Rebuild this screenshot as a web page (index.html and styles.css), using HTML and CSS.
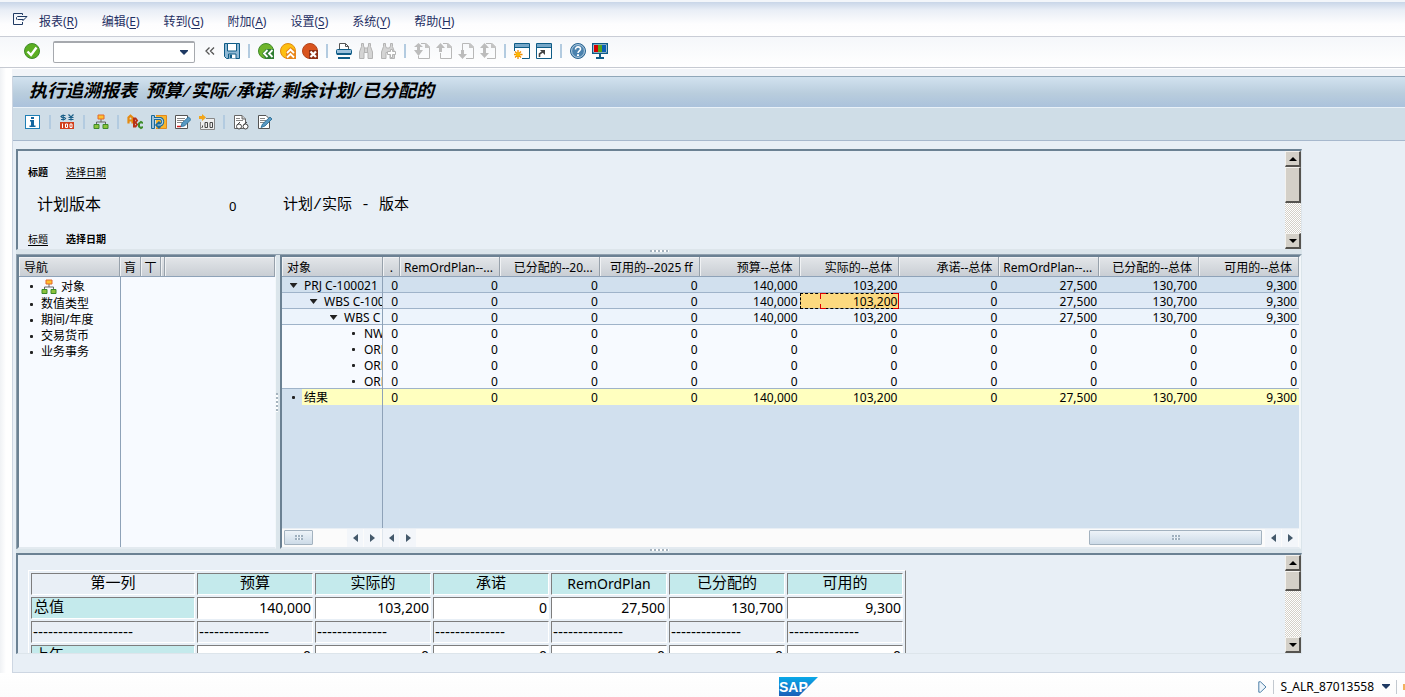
FILE: index.html
```html
<!DOCTYPE html>
<html lang="zh-CN">
<head>
<meta charset="utf-8">
<title>执行追溯报表</title>
<link rel="stylesheet" href="styles.css">
</head>
<body>
<nav class="menubar" aria-label="菜单">
  <button class="menu-icon" aria-label="系统菜单"><svg width="16" height="14" viewBox="0 0 16 14" fill="none" stroke="#1f3a63"><path d="M10.500 3V1.500H1.500V12.500H10.500V10M4.500 7.500V5.500L5.500 4.500H15L10.500 9M5.500 7.500H11.500"/></svg></button>
  <button>报表(<u>R</u>)</button>
  <button>编辑(<u>E</u>)</button>
  <button>转到(<u>G</u>)</button>
  <button>附加(<u>A</u>)</button>
  <button>设置(<u>S</u>)</button>
  <button>系统(<u>Y</u>)</button>
  <button>帮助(<u>H</u>)</button>
</nav>

<div class="toolbar">
  <button aria-label="回车"><svg width="16" height="16" viewBox="0 0 16 16"><circle cx="8" cy="8" r="7.500" fill="#5cae22" stroke="#3f8c2a"/><path d="M3.500 8.500L7 12L12.500 4.500" fill="none" stroke="#fff" stroke-width="2.400"/></svg></button>
  <div class="command">
    <input type="text" aria-label="命令字段">
    <button aria-label="历史"><svg width="8" height="5" viewBox="0 0 8 5"><path d="M0 0H8V1L4 5L0 1Z" fill="#1f3a63"/></svg></button>
  </div>
  <button aria-label="折叠"><svg width="16" height="16" viewBox="0 0 16 16" fill="none" stroke="#555" stroke-width="1.300"><path d="M7.500 4.500L4 8L7.500 11.500M12 4.500L8.500 8L12 11.500"/></svg></button>
  <button aria-label="保存"><svg width="16" height="16" viewBox="0 0 16 16"><path d="M.5.5H15.500V15.500H2.500L.5 13.500Z" fill="#8fb8d4" stroke="#0f5c87"/><path d="M3.500 .5H12.500V8H3.500Z" fill="#fff" stroke="#0f5c87"/><path d="M4.500 15.500V11H12V15.500" fill="#fff" stroke="#0f5c87"/><path d="M5.500 11.500H8V15H5.500Z" fill="#0f5c87"/></svg></button>
  <span class="sep"></span>
  <button aria-label="返回"><svg width="16" height="16" viewBox="0 0 16 16"><circle cx="8" cy="8" r="7.500" fill="#6fb52c" stroke="#3f8c2a"/><path d="M4 10.500L8 6H16V16H8Z" fill="#2f7d32"/><path d="M9.500 7L6 10.500L9.500 14M14.500 7L11 10.500L14.500 14" fill="none" stroke="#fff" stroke-width="1.800"/></svg></button>
  <button aria-label="退出"><svg width="16" height="16" viewBox="0 0 16 16"><circle cx="8" cy="8" r="7.500" fill="#fdbf11" stroke="#e08a12"/><path d="M6 8L10.500 4L16 8V16H6Z" fill="#e8861a"/><path d="M7 10L10.500 6.500L14 10M7 14.500L10.500 11L14 14.500" fill="none" stroke="#fff" stroke-width="1.800"/></svg></button>
  <button aria-label="取消"><svg width="16" height="16" viewBox="0 0 16 16"><circle cx="8" cy="8" r="7.500" fill="#d9541e" stroke="#b2451c"/><path d="M7 7H16V16H7Z" fill="#8e2f14"/><path d="M8.500 8.500L14 14M14 8.500L8.500 14" stroke="#fff" stroke-width="2.200"/></svg></button>
  <span class="sep"></span>
  <button aria-label="打印"><svg width="16" height="16" viewBox="0 0 16 16"><path d="M3.500 7V.5H9.500L12.500 3.500V7" fill="#fff" stroke="#555"/><path d="M9.500 .5V3.500H12.500" fill="none" stroke="#555"/><rect x=".5" y="6.500" width="15" height="5" rx="1" fill="#9cc1dc" stroke="#0f5c87"/><path d="M1 11H15M2 15H14" stroke="#0f5c87" stroke-width="2"/></svg></button>
  <button aria-label="查找" disabled><svg width="16" height="16" viewBox="0 0 16 16" fill="#d4d4d4" stroke="#b4b4b4"><path d="M3.500 .5H5.500V3L6.500 5H9.500L10.500 3V.5H12.500V3.500L14.500 9V15.500H10V9.500H6V15.500H1.500V9L3.500 3.500Z"/><path d="M6.500 5V9M9.500 5V9"/></svg></button>
  <button aria-label="继续查找" disabled><svg width="16" height="16" viewBox="0 0 16 16" fill="#d4d4d4" stroke="#b4b4b4"><path d="M3.500 .5H5.500V3L6.500 5H9.500L10.500 3V.5H12.500V3.500L14.500 9V15.500H10V9.500H6V15.500H1.500V9L3.500 3.500Z"/><path d="M10.500 6.500H12.500V8.500H15.500V11.500H12.500V14.500H10.500V11.500H7.500V8.500H10.500Z" fill="#fff"/></svg></button>
  <span class="sep"></span>
  <button aria-label="首页" disabled><svg width="16" height="16" viewBox="0 0 16 16"><path d="M7 .5H12L15.500 4V15.500H4.500V13" fill="none" stroke="#b8b8b8"/><path d="M11 0H12L16 4V5H11Z" fill="#c4c4c4"/><path d="M4.500 0L9 4H6V7H9L4.500 13L0 7H3V4H0Z" fill="#bcbcbc"/></svg></button>
  <button aria-label="上一页" disabled><svg width="16" height="16" viewBox="0 0 16 16"><path d="M7 .5H12L15.500 4V15.500H4.500V10" fill="none" stroke="#b8b8b8"/><path d="M11 0H12L16 4V5H11Z" fill="#c4c4c4"/><path d="M4.500 0L9 5H6V9H3V5H0Z" fill="#bcbcbc"/></svg></button>
  <button aria-label="下一页" disabled><svg width="16" height="16" viewBox="0 0 16 16"><path d="M4.500 7V.5H12L15.500 4V15.500H8" fill="none" stroke="#b8b8b8"/><path d="M11 0H12L16 4V5H11Z" fill="#c4c4c4"/><path d="M4.500 16L9 11H6V7H3V11H0Z" fill="#bcbcbc"/></svg></button>
  <button aria-label="末页" disabled><svg width="16" height="16" viewBox="0 0 16 16"><path d="M6 .5H12L15.500 4V15.500H7" fill="none" stroke="#b8b8b8"/><path d="M11 0H12L16 4V5H11Z" fill="#c4c4c4"/><path d="M4.500 0L9 5H6V10H9L4.500 15L0 10H3V5H0Z" fill="#bcbcbc"/></svg></button>
  <span class="sep"></span>
  <button aria-label="新会话"><svg width="16" height="16" viewBox="0 0 16 16"><path d="M.5.5H15.500V15.500H.5Z" fill="#fff" stroke="#0f5c87"/><path d="M1 1H15V4.500H1Z" fill="#76a7c8"/><path d="M0 4.500H16" stroke="#0f5c87"/><path d="M0 8H8V16H0Z" fill="#fff"/><path d="M4 7V16M-.5 11.500H8.500M1 8.500L7 14.500M7 8.500L1 14.500" stroke="#f08c00" stroke-width="1.300"/><circle cx="4" cy="11.500" r="2.300" fill="#fbb800"/></svg></button>
  <button aria-label="快捷方式"><svg width="16" height="16" viewBox="0 0 16 16"><path d="M.5.5H15.500V15.500H.5Z" fill="#fff" stroke="#0f5c87"/><path d="M1 1H15V4.500H1Z" fill="#76a7c8"/><path d="M0 4.500H16" stroke="#0f5c87"/><path d="M3.500 14V11L7 8.500" fill="none" stroke="#444" stroke-width="1.600"/><path d="M4 7H9V12Z" fill="#444"/></svg></button>
  <span class="sep"></span>
  <button aria-label="帮助"><svg width="16" height="16" viewBox="0 0 16 16"><circle cx="8" cy="8" r="7.500" fill="#4b82ae" stroke="#2b6592"/><circle cx="8" cy="8" r="6.400" fill="none" stroke="#b7d0e2"/><path d="M5.500 6.500C5.500 2.800 10.700 3.200 10.500 6.200C10.400 7.700 8 8 8 10" fill="none" stroke="#fff" stroke-width="1.600"/><path d="M7 11.200H9V13H7Z" fill="#fff"/></svg></button>
  <button aria-label="定制布局"><svg width="16" height="16" viewBox="0 0 16 16"><path d="M.7.7H15.300V10.300H.7Z" fill="#fff" stroke="#0f5c87" stroke-width="1.400"/><path d="M2 2H6V9H2Z" fill="#d40000"/><path d="M6 2H10V9H6Z" fill="#55a51c"/><path d="M10 2H14V9H10Z" fill="#0a5fb4"/><path d="M7 11H9V14H12V16H4V14H7Z" fill="#0f5c87"/></svg></button>
</div>

<main class="window">
  <h1>执行追溯报表<span> </span>预算<span>/</span>实际<span>/</span>承诺<span>/</span>剩余计划<span>/</span>已分配的</h1>
  <div class="appbar">
    <button aria-label="信息"><svg width="16" height="16" viewBox="0 0 16 16"><rect x=".5" y="1.500" width="14" height="13" fill="#fff" stroke="#1f7fb5"/><path d="M6 3H9V5H6ZM5 6H9V11.500H10.500V13H4.500V11.500H6V7.500H5Z" fill="#1467a0"/></svg></button>
    <span class="sep"></span>
    <button aria-label="货币"><svg width="16" height="16" viewBox="0 0 16 16"><path d="M6.500 1.500H3L2 2.500L3 3.500H5.500L6.500 4.500L5.500 5.500H2M4.200 .5V6.500M9.500 .5L12 3L14.500 .5M12 3V6.500M9.500 3.500H14.500M9.500 5.500H14.500" fill="none" stroke="#1b5f88" stroke-width="1.200"/><path d="M1 8H15V15H1Z" fill="#d2401e"/><path d="M3.500 9.500V14M6.500 10V13.500H8.500V10ZM11 10V13.500H13V10Z" fill="none" stroke="#fff"/></svg></button>
    <span class="sep"></span>
    <button aria-label="层次"><svg width="16" height="16" viewBox="0 0 16 16"><path d="M8 5V8M3.500 11V8H12.500V11" fill="none" stroke="#666"/><path d="M5 1H11V5H5Z" fill="#fdc22f" stroke="#e4672a"/><path d="M1 10.500H6V14.500H1ZM10 10.500H15V14.500H10Z" fill="#8cc23c" stroke="#3d8b27"/></svg></button>
    <span class="sep"></span>
    <button aria-label="文本"><svg width="16" height="16" viewBox="0 0 16 16" fill="none"><path d="M1.500 9.500V3.500L3.500 1.800L5.500 3.500V9.500M1.500 6.500H5.500" stroke="#e58a10" stroke-width="2.200"/><path d="M7 4.500V12.500H8.500L10 10.500L8.500 8.500L10 6.500L8.500 4.500ZM7 8.500H8.500" stroke="#b83216" stroke-width="2"/><path d="M16 9L14 8L12 9.500V12.500L14 14L16 13" stroke="#3f8c2a" stroke-width="2"/></svg></button>
    <button aria-label="浏览"><svg width="16" height="16" viewBox="0 0 16 16"><path d="M5 1.500H15.500V14.500H5" fill="#f9b52c" stroke="#e2891d"/><path d="M.5 1.500H3.500V14.500H.5Z" fill="#9cc1dc" stroke="#1b6a98"/><path d="M4 4.500H9.500A3.500 3.500 0 0 1 9.500 11H7M9 8L6 11L9 14" fill="none" stroke="#1b6a98" stroke-width="3"/><path d="M3 4.500H9.500A3.500 3.500 0 0 1 9.500 11H6.500" fill="none" stroke="#b9d4e6" stroke-width="1.200"/></svg></button>
    <button aria-label="编辑"><svg width="16" height="16" viewBox="0 0 16 16"><path d="M12.500 9V14.500H.5V1.500H12.500V4" fill="#fff" stroke="#555"/><path d="M2 4.500H10M2 6.500H9M2 8.500H7" stroke="#888"/><path d="M2 12.500H6" stroke="#d31f1f" stroke-width="1.500"/><path d="M6 12.500L7 9L13.500 3L16 5.500L9.500 12Z" fill="#5a99c2" stroke="#1f6792" stroke-width=".8"/></svg></button>
    <button aria-label="小数位"><svg width="16" height="16" viewBox="0 0 16 16"><path d="M7 4.500H15.500V15.500H1.500V8" fill="#eee" stroke="#888"/><path d="M0 2H3V0L7 3.500L3 7V5H0Z" fill="#f2a51a"/><path d="M3.500 11.500V13L2.500 14M6 8.500H8.500V13.500H6ZM11 8.500H13.500V13.500H11Z" fill="none" stroke="#444"/></svg></button>
    <span class="sep"></span>
    <button aria-label="显示文档"><svg width="16" height="16" viewBox="0 0 16 16"><path d="M1.500 1.500H9L12.500 5V14.500H1.500Z" fill="#fff" stroke="#666"/><path d="M9 1.500V5H12.500" fill="#ccc" stroke="#666"/><path d="M3 4.500H7M3 6.500H10" stroke="#888"/><circle cx="6" cy="12.500" r="2.500" fill="#fff" stroke="#444"/><circle cx="12.500" cy="12.500" r="2.500" fill="#fff" stroke="#444"/><path d="M4 11L7 8M10.500 11L14 8" stroke="#444"/></svg></button>
    <button aria-label="更改文档"><svg width="16" height="16" viewBox="0 0 16 16"><path d="M1.500 1.500H9L12.500 5V14.500H1.500Z" fill="#fff" stroke="#555"/><path d="M3 4.500H8M3 6.500H9M3 8.500H8" stroke="#888"/><path d="M4 13.500L5.500 10L13 3L15 5L8 12Z" fill="#5a99c2" stroke="#1f6792" stroke-width=".8"/></svg></button>
  </div>

  <div class="work">
    <section class="panel">
      <div class="panel-body intro">
        <p class="tabs"><strong>标题</strong><a href="#date">选择日期</a></p>
        <dl class="version"><dt>计划版本</dt><dd>0</dd><dd>计划/实际 - 版本</dd></dl>
        <p class="tabs"><a href="#title">标题</a><strong id="date">选择日期</strong></p>
      </div>
      <div class="vscroll">
        <button aria-label="向上"><svg width="8" height="4"><path d="M0 4L4 0L8 4Z"/></svg></button>
        <div class="vthumb tall"></div>
        <div class="vtrack"></div>
        <button aria-label="向下"><svg width="8" height="4"><path d="M0 0H8L4 4Z"/></svg></button>
      </div>
    </section>

    <div class="splitter"><span></span></div>

    <div class="middle">
      <section class="pane nav-pane">
        <table class="nav-table">
          <colgroup><col class="w-name"><col class="w-21"><col class="w-20"><col class="w-4"><col></colgroup>
          <thead><tr><th>导航</th><th>肓</th><th>丅</th><th></th><th></th></tr></thead>
          <tbody>
            <tr class="first"><td><div><i></i><svg width="16" height="16" viewBox="0 0 16 16"><path d="M8 5V8M3.500 11V8H12.500V11" fill="none" stroke="#666"/><path d="M5 1H11V5H5Z" fill="#fdc22f" stroke="#e4672a"/><path d="M1 10.500H6V14.500H1ZM10 10.500H15V14.500H10Z" fill="#8cc23c" stroke="#3d8b27"/></svg>对象</div></td></tr>
            <tr><td><div><i></i>数值类型</div></td></tr>
            <tr><td><div><i></i>期间/年度</div></td></tr>
            <tr><td><div><i></i>交易货币</div></td></tr>
            <tr><td><div><i></i>业务事务</div></td></tr>
          </tbody>
        </table>
      </section>
      <div class="vsplit"><span></span></div>
      <section class="pane data-pane">
        <div class="data-area">
          <table class="data-table">
            <colgroup><col class="w-name"><col class="w-17"><col span="9"></colgroup>
            <thead><tr><th>对象</th><th>.</th><th>RemOrdPlan--...</th><th>已分配的--20...</th><th>可用的--2025 ff</th><th>预算--总体</th><th>实际的--总体</th><th>承诺--总体</th><th>RemOrdPlan--...</th><th>已分配的--总体</th><th>可用的--总体</th></tr></thead>
            <tbody>
              <tr class="l1"><td><div><i class="open"></i>PRJ C-100021</div></td><td>0</td><td>0</td><td>0</td><td>0</td><td>140,000</td><td>103,200</td><td>0</td><td>27,500</td><td>130,700</td><td>9,300</td></tr>
              <tr class="l2"><td><div><i class="open"></i>WBS C-100</div></td><td>0</td><td>0</td><td>0</td><td>0</td><td>140,000</td><td class="selected">103,200<svg class="cursor" width="79" height="16" viewBox="0 0 79 16" fill="none" stroke="#e00000"><path d="M6 .5H.5V15.500H6" stroke-dasharray="11 5"/><path d="M73 .5H78.500V15.500H73"/></svg></td><td>0</td><td>27,500</td><td>130,700</td><td>9,300</td></tr>
              <tr class="l3"><td><div><i class="open"></i>WBS C</div></td><td>0</td><td>0</td><td>0</td><td>0</td><td>140,000</td><td>103,200</td><td>0</td><td>27,500</td><td>130,700</td><td>9,300</td></tr>
              <tr class="l4"><td><div><i></i>NW</div></td><td>0</td><td>0</td><td>0</td><td>0</td><td>0</td><td>0</td><td>0</td><td>0</td><td>0</td><td>0</td></tr>
              <tr class="l4"><td><div><i></i>ORD</div></td><td>0</td><td>0</td><td>0</td><td>0</td><td>0</td><td>0</td><td>0</td><td>0</td><td>0</td><td>0</td></tr>
              <tr class="l4"><td><div><i></i>ORD</div></td><td>0</td><td>0</td><td>0</td><td>0</td><td>0</td><td>0</td><td>0</td><td>0</td><td>0</td><td>0</td></tr>
              <tr class="l4 last"><td><div><i></i>ORD</div></td><td>0</td><td>0</td><td>0</td><td>0</td><td>0</td><td>0</td><td>0</td><td>0</td><td>0</td><td>0</td></tr>
              <tr class="sum"><td><div><i></i>结果</div></td><td>0</td><td>0</td><td>0</td><td>0</td><td>140,000</td><td>103,200</td><td>0</td><td>27,500</td><td>130,700</td><td>9,300</td></tr>
            </tbody>
          </table>
        </div>
        <div class="hscroll">
          <div class="hpart frozen">
            <div class="hthumb short"><span></span></div><div class="htrack"></div>
            <button aria-label="左"><svg width="5" height="8"><path d="M5 0V8L0 4Z"/></svg></button>
            <button aria-label="右"><svg width="5" height="8"><path d="M0 0V8L5 4Z"/></svg></button>
          </div>
          <div class="hpart">
            <button aria-label="左"><svg width="5" height="8"><path d="M5 0V8L0 4Z"/></svg></button>
            <button aria-label="右"><svg width="5" height="8"><path d="M0 0V8L5 4Z"/></svg></button>
            <div class="htrack"></div><div class="hthumb long"><span></span></div>
            <button aria-label="左"><svg width="5" height="8"><path d="M5 0V8L0 4Z"/></svg></button>
            <button aria-label="右"><svg width="5" height="8"><path d="M0 0V8L5 4Z"/></svg></button>
          </div>
        </div>
      </section>
    </div>

    <div class="splitter"><span></span></div>

    <section class="panel">
      <div class="panel-body">
        <table class="totals" id="title">
          <thead><tr><th>第一列</th><th>预算</th><th>实际的</th><th>承诺</th><th class="latin">RemOrdPlan</th><th>已分配的</th><th>可用的</th></tr></thead>
          <tbody>
            <tr><th>总值</th><td>140,000</td><td>103,200</td><td>0</td><td>27,500</td><td>130,700</td><td>9,300</td></tr>
            <tr class="rule"><td>--------------------</td><td>--------------</td><td>--------------</td><td>--------------</td><td>--------------</td><td>--------------</td><td>--------------</td></tr>
            <tr><th>上年</th><td>0</td><td>0</td><td>0</td><td>0</td><td>0</td><td>0</td></tr>
          </tbody>
        </table>
      </div>
      <div class="vscroll">
        <button aria-label="向上"><svg width="8" height="4"><path d="M0 4L4 0L8 4Z"/></svg></button>
        <div class="vthumb"></div>
        <div class="vtrack"></div>
        <button aria-label="向下"><svg width="8" height="4"><path d="M0 0H8L4 4Z"/></svg></button>
      </div>
    </section>
  </div>
</main>

<footer class="statusbar">
  <svg class="logo" width="39" height="19" viewBox="0 0 39 19" role="img" aria-label="SAP"><defs><linearGradient id="g" x1="0" y1="0" x2="0" y2="1"><stop offset="0" stop-color="#0aa9e8"/><stop offset="1" stop-color="#1b5fb8"/></linearGradient></defs><path d="M0 0H39L20 19H0Z" fill="url(#g)"/><text x="0" y="15" class="logo-text">SAP</text></svg>
  <button aria-label="展开"><svg width="9" height="12" viewBox="0 0 9 12"><path d="M.8 .8H2.500L8 6L2.500 11.200H.8Z" fill="#eef5fb" stroke="#4f81a8"/></svg></button>
  <span class="bar"></span>
  <span class="tcode">S_ALR_87013558</span>
  <button aria-label="系统信息"><svg width="8" height="5" viewBox="0 0 8 5"><path d="M0 0H8V1L4 5L0 1Z" fill="#1f3a63"/></svg></button>
  <span class="bar"></span>
  <span class="edge"></span>
</footer>
</body>
</html>
```
FILE: styles.css
```css
* { box-sizing: border-box; }
html, body { height: 100%; }
body {
  margin: 0;
  display: flex;
  flex-direction: column;
  overflow: hidden;
  background: linear-gradient(90deg, #f0f2f5 0, #fff 6px);
  color: #000;
  font: 12px/16px "Noto Sans", "Noto Sans CJK SC", sans-serif;
}
button {
  display: inline-flex;
  align-items: center;
  justify-content: center;
  flex: none;
  padding: 0;
  border: 0;
  background: none;
  color: inherit;
  font: inherit;
}
svg { display: block; flex: none; }
table { border-spacing: 0; }
th { font-weight: 400; }
p, dl, dd { margin: 0; }

/* menu */
.menubar {
  flex: none;
  display: flex;
  align-items: center;
  gap: 24px;
  height: 37px;
  padding: 8px 12px 0;
  border-bottom: 1px solid #c9cdd6;
  background: linear-gradient(#f3f6fa 0, #f3f6fa 2px, #c9d6e8 2px, #e9eef6 10px, #fdfdfe 24px, #fff 100%);
  color: #1f2f63;
}
.menu-icon { margin: 0 -13px 6px 0; }
.menubar u { text-underline-offset: 2px; }

/* standard toolbar */
.toolbar {
  flex: none;
  display: flex;
  align-items: center;
  height: 31px;
  padding: 0 21px 2px;
  border-bottom: 1px solid #c6cad2;
  background: linear-gradient(#f5f7fa, #fff);
}
.toolbar > button { width: 22px; height: 22px; }
.sep {
  flex: none;
  width: 12px;
  height: 14px;
  background: linear-gradient(#b3cbe0, #b3cbe0) center / 2px 100% no-repeat;
}
.command {
  display: flex;
  width: 142px;
  height: 22px;
  margin: 2px 4px 0 10px;
  border: 1px solid #a6a9ae;
  border-top-width: 2px;
  border-radius: 2px;
  background: #fff;
}
.command input { flex: 1; min-width: 0; border: 0; padding: 0 4px; background: none; font: inherit; }
.command button { width: 20px; }

/* window */
.window {
  flex: 1;
  min-height: 0;
  display: flex;
  flex-direction: column;
  margin: 8px 0 0 12px;
  border: solid #cdd6e2;
  border-width: 0 0 1px 1px;
  background: #e8eff6;
  box-shadow: 0 -7px #f1f4f8;
}
h1 {
  flex: none;
  height: 32px;
  margin: 0;
  padding: 0 16px;
  border-top: 1px solid #8fa7b9;
  border-bottom: 1px solid #e9f1f8;
  background: linear-gradient(#d2e2ef, #b9cddd 55%, #abc2dc);
  font: italic 700 18px/25px "Noto Sans CJK SC", sans-serif;
  white-space: pre;
}
h1 span { font-family: "Liberation Mono", monospace; font-size: 15px; }
.appbar {
  flex: none;
  display: flex;
  align-items: center;
  height: 33px;
  padding: 0 8px 4px;
  border-bottom: 1px solid #a7b8cd;
  background: #cfdde7;
}
.appbar button { width: 24px; height: 24px; }
.appbar .sep { width: 10px; }
.work {
  flex: 1;
  min-height: 0;
  display: flex;
  flex-direction: column;
  padding: 8px 103px 18px 3px;
}
.panel {
  flex: none;
  display: flex;
  height: 101px;
  border: 1px solid;
  border-width: 2px 1px 1px 2px;
  border-color: #6b8193 #dde5eb #dde5eb #6b8193;
}
.panel-body { flex: 1; overflow: hidden; }
.intro { padding: 13px 10px 0; }
.tabs { display: flex; gap: 18px; font-size: 10px; }
.version {
  display: grid;
  grid-template-columns: 192px 54px 1fr;
  align-items: center;
  margin: 16px 0 15px;
  padding-left: 9px;
  font: 15px/20px "Liberation Mono", "Noto Sans CJK SC", monospace;
}
.version dt { font-size: 16px; }
.version dt + dd { font: 13px/18px "Noto Sans", sans-serif; }
a { color: inherit; text-underline-offset: 2px; }

/* classic vertical scrollbar */
.vscroll { flex: none; display: flex; flex-direction: column; width: 16px; }
.vscroll button { height: 16px; }
.vscroll button, .vthumb {
  flex: none;
  border: solid;
  border-width: 1px 2px 2px 1px;
  border-color: #f4f2ee #55534f #55534f #f4f2ee;
  background: #d4d0c8;
}
.vthumb { height: 20px; }
.vthumb.tall { height: 36px; }
.vtrack { flex: 1; background: repeating-conic-gradient(#d4d0c8 0 25%, #fff 0 50%) 0 0 / 2px 2px; }

/* splitters */
.splitter { flex: none; display: flex; justify-content: center; height: 4px; background: #dbe5eb; }
.splitter span { width: 19px; height: 2px; background: repeating-linear-gradient(90deg, #a5b3be 0 2px, #fff 2px 4px); }
.vsplit { flex: none; display: flex; align-items: center; width: 4px; background: #dbe5eb; }
.vsplit span { width: 2px; height: 19px; background: repeating-linear-gradient(#a5b3be 0 2px, #fff 2px 4px); }

/* middle area */
.middle {
  flex: 1;
  min-height: 0;
  display: flex;
  border-top: 1px solid #8fa0ae;
  border-left: 1px solid #8fa0ae;
  border-right: 1px solid #dbe5eb;
}
.pane {
  border: solid;
  border-width: 2px 1px 2px 2px;
  border-color: #6b8193 #f3f7fa #e3eaf0 #6b8193;
}
.nav-pane {
  flex: none;
  width: 259px;
  background: linear-gradient(#8ea2b8, #8ea2b8) 101px 0 / 1px 100% no-repeat #f7faff;
}
.data-pane { flex: 1; min-width: 0; display: flex; flex-direction: column; border-right-width: 2px; }
.data-area {
  flex: 1;
  min-height: 0;
  overflow: hidden;
  background: linear-gradient(#8ea2b8, #8ea2b8) 100px 0 / 1px 100% no-repeat #d1e0ee;
}
.nav-table, .data-table { width: 100%; table-layout: fixed; }
.w-name { width: 101px; }
.w-21 { width: 21px; }
.w-20 { width: 20px; }
.w-17 { width: 17px; }
.w-4 { width: 4px; }
.nav-table th, .data-table th {
  height: 20px;
  padding: 1px 6px 0 0;
  border-right: 1px solid #97a1ab;
  border-bottom: 1px solid #8ea2b8;
  background: linear-gradient(#e3e6e9, #c9ced4);
  box-shadow: inset 1px 1px #f0f2f4;
  line-height: 17px;
  text-align: right;
  white-space: nowrap;
}
.nav-table th:first-child, .data-table th:first-child { padding-left: 5px; text-align: left; }
.nav-table th + th { padding: 1px 0 0; text-align: center; }
.nav-table td { height: 16px; padding: 0; }
.nav-table .first td { height: 19px; }
.nav-table td div { display: flex; align-items: center; padding-left: 5px; }
.nav-table i, .data-table i { flex: none; display: flex; justify-content: center; width: 15px; }
.nav-table i { margin-right: 2px; }
.nav-table svg { margin-right: 4px; }
.nav-table i::before, .data-table i::before { content: ""; width: 3px; height: 3px; border-radius: 1px; background: #222; }
.data-table td { height: 16px; padding: 1px 2px 0 0; line-height: 15px; text-align: right; }
.data-table td:first-child { padding: 1px 0 0; border-right: 1px solid #8ea2b8; }
.data-table td div { display: flex; align-items: center; overflow: hidden; white-space: nowrap; }
.data-table td i { margin-right: 3px; }
.data-table i.open::before {
  width: 8px;
  height: 5px;
  border-radius: 0;
  clip-path: polygon(0 0, 100% 0, 50% 100%);
}
.l1 td, .l2 td, .l3 td, .last td { box-shadow: inset 0 -1px #9fb3c9; }
.l1 { background: #d1e0ee; }
.l2 { background: #e1ebf7; }
.l3 { background: #edf4fc; }
.l4 { background: #f7faff; }
.sum { background: linear-gradient(90deg, #d1e0ee 20px, #ffffbf 20px); }
.l1 div, .sum div { padding-left: 4px; }
.l2 div { padding-left: 24px; }
.l3 div { padding-left: 44px; }
.l4 div { padding-left: 64px; }
.data-table .selected { position: relative; background: #fcd97f; outline: 1px dashed #000; outline-offset: -1px; }
.cursor { position: absolute; right: 0; top: 0; }

/* horizontal scrollbars */
.hscroll { flex: none; display: flex; height: 19px; padding-top: 1px; background: #e9eff5; }
.hpart { flex: 1; display: flex; gap: 1px; padding-right: 1px; background: #fbfbfb; }
.hpart.frozen { flex: none; width: 101px; padding: 0 2px; border-right: 1px solid #dfe6ed; }
.hpart button { width: 16px; background: #f3f6fa; }
.hpart svg { fill: #44596b; }
.htrack { flex: 1; }
.hthumb {
  flex: none;
  display: flex;
  align-items: center;
  justify-content: center;
  height: 15px;
  margin-top: 1px;
  border: 1px solid #a3b2bf;
  border-radius: 1px;
  background: linear-gradient(#edf3f8, #cddbe8);
}
.hthumb span {
  width: 8px;
  height: 5px;
  background:
    linear-gradient(transparent 2px, #dde7f0 2px 3px, transparent 3px),
    repeating-linear-gradient(90deg, #9fb0be 0 2px, #f5f9fc 2px 3px);
}
.short { width: 29px; }
.long { width: 173px; margin-right: 2px; }

/* totals */
.totals {
  margin: 15px 0 0 10px;
  border: 1px solid;
  border-color: #fff #7d7d7d #7d7d7d #fff;
  border-spacing: 2px;
  font-size: 14px;
  white-space: nowrap;
}
.totals th, .totals td {
  width: 116px;
  height: 22px;
  padding: 0 1px;
  border: 1px solid;
  border-color: #7d7d7d #fff #fff #7d7d7d;
  background: #fff;
  line-height: 20px;
  text-align: right;
}
.totals th { padding: 0 2px 3px; background: #c4eaec; font-size: 15px; line-height: 17px; text-align: left; }
.totals thead th { text-align: center; }
.totals .latin { padding-bottom: 0; font-size: 14px; line-height: 20px; }
.totals tr > :first-child { width: 164px; }
.totals thead th:first-child { background: #e9eff6; }
.totals .rule td { background: #e9eff6; font: 15px/20px "Liberation Sans", sans-serif; text-align: left; }

/* status bar */
.statusbar {
  flex: none;
  display: flex;
  align-items: center;
  height: 24px;
  padding-top: 3px;
  background: linear-gradient(#fff, #fcfcfc);
}
.logo { margin: 0 440px 0 auto; }
.logo-text { fill: #fff; font: 700 14px "Liberation Sans", sans-serif; }
.bar { width: 1px; height: 14px; margin: 0 6px; background: #c3c9d0; }
.tcode { margin-right: 8px; }
.edge { width: 2px; height: 6px; background: #f2b25c; }
```
